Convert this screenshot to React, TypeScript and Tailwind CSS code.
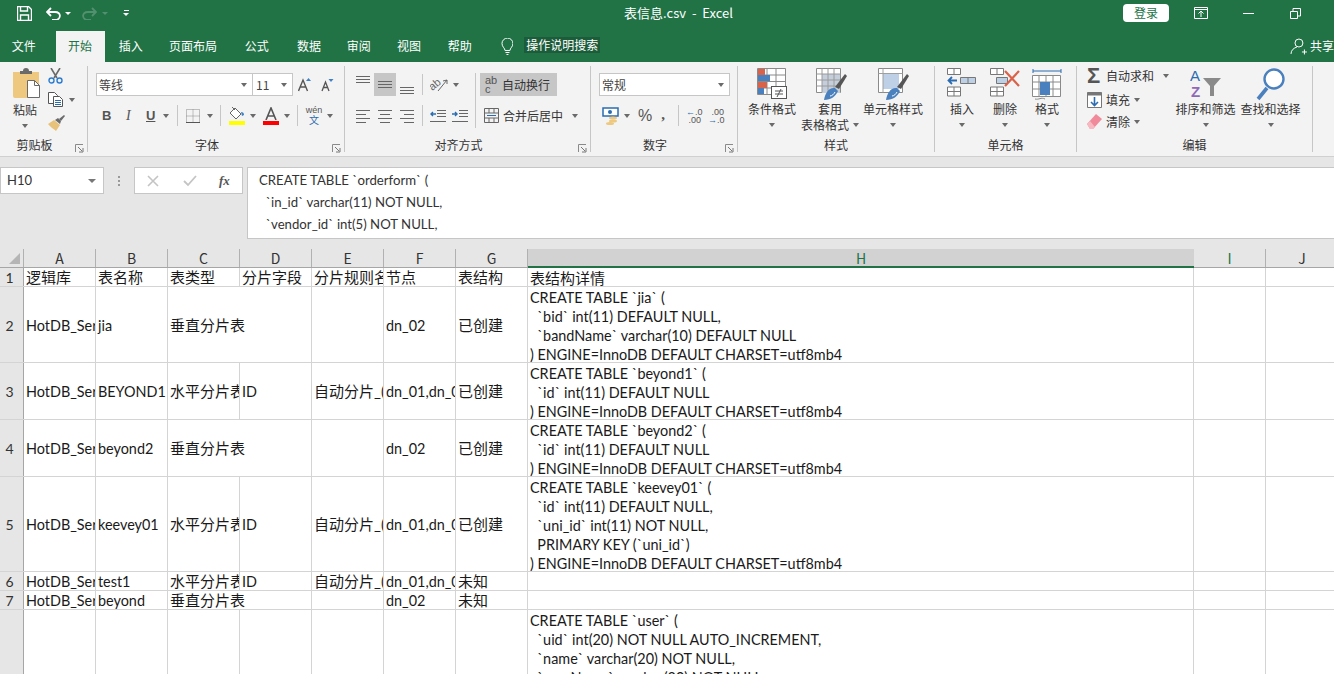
import type { ReactNode } from "react";

const ui = "font-['Noto_Sans_CJK_SC','Noto_Sans',sans-serif]";

function Caret({ className = "" }: { className?: string }) {
  return <span className={`block w-0 h-0 border-x-[3.5px] border-x-transparent border-t-[4px] border-t-[#6a6a6a] ${className}`} />;
}

function Launcher() {
  return (
    <svg width="9" height="9" viewBox="0 0 9 9" className="absolute right-[3px] bottom-[3px]">
      <path d="M.5 8V.5H8" fill="none" stroke="#8a8a8a" />
      <path d="M3 3l4 4M8 4v4H4" fill="none" stroke="#777" />
    </svg>
  );
}

function Group({ w, label, children, launcher }: { w: string; label: string; children: ReactNode; launcher?: boolean }) {
  return (
    <div className={`relative shrink-0 h-full flex flex-col ${w}`}>
      <div className="h-[76px] flex">{children}</div>
      <div className={`text-center text-xs leading-4 text-[#333] mt-[-1px] ${launcher ? "pr-[18px]" : ""}`}>{label}</div>
      {launcher && <Launcher />}
    </div>
  );
}

function Divider() {
  return <div className="w-px h-[86px] mt-1 bg-[#c6c6c6] shrink-0" />;
}

function Sep({ h = "h-[21px]" }: { h?: string }) {
  return <span className={`block w-px bg-[#c6c6c6] ${h}`} />;
}

function Lines({ kind = "l" }: { kind?: "l" | "c" | "r" | "f" }) {
  const rows = [1.5, 5.5, 9.5, 13.5];
  const span: Record<string, number[][]> = {
    l: [[0, 14], [0, 10], [0, 14], [0, 10]],
    c: [[0, 14], [2, 12], [0, 14], [2, 12]],
    r: [[0, 14], [4, 14], [0, 14], [4, 14]],
  };
  if (kind === "f") {
    return (
      <svg width="14" height="7" viewBox="0 0 14 7" className="block">
        <path d="M0 .5h14M0 3.5h14M0 6.5h14" stroke="#666" />
      </svg>
    );
  }
  return (
    <svg width="14" height="14" viewBox="0 0 14 14" className="block">
      {rows.map((r, i) => (
        <path key={r} d={`M${span[kind][i][0]} ${r}H${span[kind][i][1]}`} stroke="#666" />
      ))}
    </svg>
  );
}

function Clipboard() {
  return (
    <div className="flex pt-[6px]">
      <div className="w-[40px] ml-[12px] flex flex-col items-center shrink-0">
        <svg width="29" height="30" viewBox="0 0 29 30" className="ml-[-12px]">
          <path d="M1 4h26v14H16v12H3a2 2 0 0 1-2-2z" fill="#edc87e" />
          <path d="M8 5V3h3a3 3 0 0 1 6 0h3v3H8z" fill="#6a6a6a" />
          <path d="M15.5 12.5h7l5 5v12h-12z" fill="#fff" stroke="#6a6a6a" />
          <path d="M22.5 12.5v5h5" fill="none" stroke="#6a6a6a" />
        </svg>
        <span className="text-xs leading-4 mt-[4px] ml-[-14px] text-[#333]">粘贴</span>
        <Caret className="mt-[6px] ml-[-14px]" />
      </div>
      <div className="flex flex-col items-start ml-[-4px]">
        <svg width="15" height="16" viewBox="0 0 15 16">
          <path d="M3 0l6 10M12 0L6 10" stroke="#6a6a6a" strokeWidth="1.6" />
          <circle cx="3.5" cy="12.5" r="2.5" fill="none" stroke="#2b7cd3" strokeWidth="1.4" />
          <circle cx="11.5" cy="12.5" r="2.5" fill="none" stroke="#2b7cd3" strokeWidth="1.4" />
        </svg>
        <div className="flex items-center mt-[8px]">
          <svg width="16" height="15" viewBox="0 0 16 15">
            <path d="M.5.5h6l3 3v8h-9z" fill="#fff" stroke="#555" />
            <path d="M5.5 4.5h6l3 3v7h-9z" fill="#fff" stroke="#555" />
            <path d="M7 8.5h6M7 10.5h6M7 12.5h6" stroke="#2b6cb0" />
          </svg>
          <Caret className="ml-[5px]" />
        </div>
        <svg width="17" height="16" viewBox="0 0 17 16" className="mt-[8px]">
          <path d="M0 9l6-4 6 5-4 6C6 14 2 12 0 9z" fill="#e8c27a" />
          <path d="M7 5l3-2 3 3-1 3z" fill="#6a6a6a" />
          <path d="M11 4l5-4 1 1-4 5z" fill="#6a6a6a" />
        </svg>
      </div>
    </div>
  );
}

function FontGroup() {
  return (
    <div className="flex flex-col ml-[8px] pt-[11px] gap-[9px]">
      <div className="flex items-center">
        <div className="w-[157px] h-[23px] bg-white border border-[#c6c6c6] flex items-center justify-between pl-[2px] pr-[5px] text-xs text-[#444]">
          等线
          <Caret />
        </div>
        <div className="w-[40px] h-[23px] bg-white border border-[#c6c6c6] border-l-0 flex items-center justify-between pl-[3px] pr-[5px] text-xs text-[#444]">
          11
          <Caret />
        </div>
        <svg width="14" height="14" viewBox="0 0 14 14" className="ml-[5px]">
          <path d="M.5 13L5 2l4.5 11M2.5 9h5" fill="none" stroke="#555" strokeWidth="1.4" />
          <path d="M8 3l2.5-3L13 3z" fill="#3f80c4" />
        </svg>
        <svg width="13" height="13" viewBox="0 0 13 13" className="ml-[9px] mt-px">
          <path d="M1 12L4.5 3 8 12M2.500 8.500h4" fill="none" stroke="#555" strokeWidth="1.3" />
          <path d="M7.500 0h5L10 3z" fill="#3f80c4" />
        </svg>
      </div>
      <div className="flex items-center h-[21px] text-[#555]">
        <span className="w-[10px] ml-[6px] font-['Liberation_Sans'] font-bold text-[13px] leading-4">B</span>
        <span className="w-[8px] ml-[14px] font-['Liberation_Serif'] italic text-[14px] leading-4">I</span>
        <span className="w-[10px] ml-[12px] font-['Liberation_Sans'] underline font-bold text-[13px] leading-4">U</span>
        <Caret className="ml-[7px]" />
        <span className="ml-[8px]"><Sep /></span>
        <svg width="14" height="14" viewBox="0 0 14 14" className="ml-[8px]">
          <path d="M.5.5h13v13h-13zM7 .5v13M.5 7h13" fill="none" stroke="#888" strokeDasharray="1 1" />
          <path d="M0 13.500h14" stroke="#555" />
        </svg>
        <Caret className="ml-[7px]" />
        <span className="ml-[7px]"><Sep /></span>
        <div className="ml-[7px] w-[17px] flex flex-col items-center mt-[1px]">
          <svg width="16" height="13" viewBox="0 0 16 13">
            <path d="M6 1l6 6-5 5-6-6z" fill="#fff" stroke="#666" />
            <path d="M3 0l3 3" stroke="#666" />
            <path d="M12 5c2 0 3 1 3 3l-2 1z" fill="#3f80c4" />
          </svg>
          <span className="block w-[16px] h-[4px] bg-[#ffff00] mt-[1px]" />
        </div>
        <Caret className="ml-[5px]" />
        <div className="ml-[6px] w-[17px] flex flex-col items-center mt-[1px]">
          <svg width="14" height="13" viewBox="0 0 14 13">
            <path d="M2 13L7 1l5 12M4 9h6" fill="none" stroke="#555" strokeWidth="1.6" />
          </svg>
          <span className="block w-[16px] h-[4px] bg-[#ff0000] mt-[1px]" />
        </div>
        <Caret className="ml-[5px]" />
        <span className="ml-[7px]"><Sep /></span>
        <div className="ml-[8px] w-[16px] flex flex-col items-center leading-none">
          <span className="text-[9px] leading-[9px] font-['Liberation_Sans'] text-[#555]">wén</span>
          <span className="text-[10px] leading-[10px] text-[#2b6cb0]">文</span>
        </div>
        <Caret className="ml-[5px]" />
      </div>
    </div>
  );
}

function AlignGroup() {
  return (
    <div className="flex ml-[11px] pt-[11px]">
      <div className="flex flex-col gap-[9px]">
        <div className="flex h-[23px] items-center">
          <div className="w-[14px] self-start mt-[3px]"><Lines kind="f" /></div>
          <div className="w-[22px] h-[23px] ml-[4px] bg-[#c6c6c6] flex items-center justify-center"><Lines kind="f" /></div>
          <div className="w-[14px] ml-[4px] self-end mb-[2px]"><Lines kind="f" /></div>
          <span className="ml-[8px]"><Sep /></span>
          <svg width="18" height="17" viewBox="0 0 18 17" className="ml-[7px]">
            <text x="0" y="13" transform="rotate(-40 4 11)" fontSize="11" fontFamily="Liberation Sans" fill="#666">ab</text>
            <path d="M8 15L17 4M17 4l-4 1M17 4v4" fill="none" stroke="#666" />
          </svg>
          <Caret className="ml-[5px]" />
        </div>
        <div className="flex h-[21px] items-center">
          <Lines kind="l" />
          <span className="ml-[8px]"><Lines kind="c" /></span>
          <span className="ml-[8px]"><Lines kind="r" /></span>
          <span className="ml-[8px]"><Sep /></span>
          <svg width="16" height="12" viewBox="0 0 16 12" className="ml-[7px]">
            <path d="M7 .5h9M7 3.500h9M7 6.500h9M0 11.500h16" stroke="#666" />
            <path d="M6 4H1M3 2L1 4l2 2" fill="none" stroke="#2b6cb0" strokeWidth="1.4" />
          </svg>
          <svg width="16" height="12" viewBox="0 0 16 12" className="ml-[6px]">
            <path d="M7 .5h9M7 3.500h9M7 6.500h9M0 11.500h16" stroke="#666" />
            <path d="M0 4h5M3 2l2 2-2 2" fill="none" stroke="#2b6cb0" strokeWidth="1.4" />
          </svg>
        </div>
      </div>
      <span className="ml-[7px] block w-px h-[55px] bg-[#c6c6c6]" />
      <div className="flex flex-col gap-[9px] ml-[4px]">
        <div className="w-[77px] h-[23px] bg-[#c6c6c6] flex items-center pl-[5px] text-xs text-[#333]">
          <span className="w-[13px] text-[11px] leading-[9px] font-['Liberation_Sans'] text-[#555]">ab<br />c</span>
          <span className="ml-[4px]">自动换行</span>
        </div>
        <div className="flex items-center h-[21px] pl-[4px] text-xs text-[#333]">
          <svg width="15" height="15" viewBox="0 0 15 15">
            <path d="M.5.5h14v14H.5zM.5 5h14M.5 10h14M5 .5V5M10 .5V5M5 10v4.500M10 10v4.500" fill="none" stroke="#666" />
            <path d="M3 7.500h9" stroke="#2b6cb0" />
          </svg>
          <span className="ml-[4px]">合并后居中</span>
          <Caret className="ml-[9px]" />
        </div>
      </div>
    </div>
  );
}

function NumberGroup() {
  return (
    <div className="flex flex-col ml-[8px] pt-[11px] gap-[9px]">
      <div className="w-[131px] h-[23px] bg-white border border-[#c6c6c6] flex items-center justify-between pl-[2px] pr-[5px] text-xs text-[#444]">
        常规
        <Caret />
      </div>
      <div className="flex items-center h-[21px] text-[#555]">
        <svg width="17" height="18" viewBox="0 0 17 18" className="ml-[3px]">
          <rect x="1" y="1" width="15" height="8" fill="#fff" stroke="#2b6cb0" strokeWidth="1.5" />
          <circle cx="8" cy="5" r="2" fill="#2b6cb0" />
          <ellipse cx="11" cy="11" rx="4" ry="1.500" fill="#edc87e" />
          <ellipse cx="11" cy="14" rx="4" ry="1.500" fill="#edc87e" />
          <ellipse cx="8" cy="16.500" rx="4" ry="1.500" fill="#edc87e" />
        </svg>
        <Caret className="ml-[5px]" />
        <span className="ml-[8px] text-[16px] font-['Liberation_Sans'] leading-4">%</span>
        <span className="ml-[9px] text-[15px] font-bold font-['Liberation_Serif'] leading-[12px] mb-[4px]">,</span>
        <span className="ml-[13px]"><Sep /></span>
        <div className="ml-[7px] w-[15px] text-[9px] leading-[8px] font-['Liberation_Sans'] text-right text-[#555] whitespace-nowrap">
          <span className="text-[#2b6cb0]">←</span>.0<br />.00
        </div>
        <div className="ml-[7px] w-[16px] text-[9px] leading-[8px] font-['Liberation_Sans'] text-right text-[#555] whitespace-nowrap">
          .00<br /><span className="text-[#2b6cb0]">→</span>.0
        </div>
      </div>
    </div>
  );
}

function BigButton({ w, icon, label, label2, ml = "" }: { w: string; icon: ReactNode; label: string; label2?: string; ml?: string }) {
  return (
    <div className={`${w} ${ml} shrink-0 flex flex-col items-center pt-[6px]`}>
      <div className="h-[30px] flex items-start justify-center">{icon}</div>
      <span className="text-xs leading-4 mt-[3px] whitespace-nowrap text-[#333]">{label}</span>
      {label2 ? (
        <span className="flex items-center text-xs leading-4 whitespace-nowrap text-[#333]">
          {label2}
          <Caret className="ml-[4px]" />
        </span>
      ) : (
        <Caret className="mt-[6px]" />
      )}
    </div>
  );
}

function CondIcon() {
  return (
    <svg width="30" height="31" viewBox="0 0 30 31">
      <path d="M.5.5h28v26H.5zM.5 7h28M.5 13.500h28M.5 20h28M10 .5v26M19 .5v26" fill="#fff" stroke="#8a8a8a" />
      <rect x="1" y="1" width="7" height="6" fill="#d9634a" />
      <rect x="1" y="7" width="12" height="6" fill="#4a80bd" />
      <rect x="1" y="14" width="9" height="6" fill="#d9634a" />
      <rect x="1" y="20" width="6" height="6" fill="#4a80bd" />
      <rect x="14.500" y="18.500" width="15" height="12" fill="#fff" stroke="#555" />
      <path d="M18 23h8M18 26h8M24 21l-4 8" stroke="#555" />
    </svg>
  );
}

function TableStyleIcon({ filled }: { filled?: boolean }) {
  return (
    <svg width="31" height="33" viewBox="0 0 31 33" className={filled ? "" : "ml-[3px]"}>
      <path d="M.5.5h24v24H.5z" fill="#fff" stroke="#8a8a8a" />
      {filled ? (
        <path d="M5 6h16v15H5z" fill="#bdd0e6" />
      ) : (
        <path d="M6 6h18v19H6z" fill="#c5cfdc" />
      )}
      {!filled && <path d="M.5 6h24M.5 12h24M.5 18h24M6 .5v24M12 .5v24M18 .5v24" stroke="#9a9a9a" />}
      {filled && <path d="M.5 5.500h24M5 .5v24" stroke="#a0a0a0" />}
      <path d="M19 19L29 6l2 2-8 13z" fill="#555" />
      <path d="M8 32c1-7 5-13 11-12l3 3c-2 5-7 9-14 9z" fill="#4a80bd" />
      <path d="M14 28c2 0 4-2 5-4" stroke="#fff" fill="none" />
    </svg>
  );
}

function InsertIcon() {
  return (
    <svg width="30" height="29" viewBox="0 0 30 29">
      <path d="M.5.5h13v6H.5zM7 .5v6M.5 19h13v9H.5zM7 19v9M.5 23.500h13" fill="#fff" stroke="#777" />
      <path d="M13.500 9.500h15v6h-15zM21 9.500v6" fill="#bdd0e6" stroke="#777" />
      <path d="M10 12.500H2M5 9l-3.500 3.500L5 16" fill="none" stroke="#2b6cb0" strokeWidth="1.8" />
    </svg>
  );
}

function DeleteIcon() {
  return (
    <svg width="31" height="29" viewBox="0 0 31 29">
      <path d="M.5.500h13v6H.5zM7 .500v6M.5 19h13v9H.5zM7 19v9M.5 23.500h13" fill="#fff" stroke="#777" />
      <path d="M6.500 9.500h11v6h-11z" fill="#bdd0e6" stroke="#777" />
      <path d="M15 3l14 15M29 3L15 18" stroke="#d9634a" strokeWidth="2.2" />
    </svg>
  );
}

function FormatIcon() {
  return (
    <svg width="30" height="33" viewBox="0 0 30 33">
      <path d="M1 3h28M1 1v4M29 1v4" stroke="#2b6cb0" />
      <path d="M.5 7.500h28v21H.5zM.5 14h28M.5 21h28M7 7.500v21M14 7.500v21M21 7.500v21" fill="#fff" stroke="#8a8a8a" />
      <rect x="8" y="14" width="10" height="13" fill="#4a80bd" />
      <path d="M3 31c4 1 6-2 10 0" fill="none" stroke="#8a8a8a" />
    </svg>
  );
}

function SortIcon() {
  return (
    <svg width="32" height="30" viewBox="0 0 32 30">
      <text x="0" y="13" fontSize="15" fontFamily="Liberation Sans" fill="#2b6cb0">A</text>
      <text x="1" y="29" fontSize="15" fontFamily="Liberation Sans" fontWeight="bold" fill="#9068b8">Z</text>
      <path d="M13 10h18l-7 8v10h-4V18z" fill="#8a8a8a" />
    </svg>
  );
}

function SearchIcon() {
  return (
    <svg width="29" height="33" viewBox="0 0 29 33">
      <circle cx="18" cy="11" r="9.500" fill="#fff" stroke="#4a80bd" strokeWidth="2.4" />
      <path d="M2 31l9-11" stroke="#4a80bd" strokeWidth="3.6" />
    </svg>
  );
}

function EditGroup() {
  return (
    <div className="flex">
      <div className="w-[113px] ml-[10px] pt-[5px] flex flex-col text-xs text-[#333] shrink-0">
        <div className="flex items-center h-[17px]">
          <span className="w-[16px] text-[22px] leading-4 font-bold font-['Liberation_Sans'] text-[#555]">Σ</span>
          <span className="ml-[3px]">自动求和</span>
          <Caret className="ml-[9px]" />
        </div>
        <div className="flex items-center h-[17px] mt-[7px]">
          <svg width="15" height="16" viewBox="0 0 15 16">
            <path d="M.5.5h14v15H.5z" fill="#fff" stroke="#777" />
            <path d="M.5.5h14v3H.5z" fill="#777" />
            <path d="M7.500 5v8M4 10l3.500 3.500L11 10" fill="none" stroke="#2b6cb0" strokeWidth="1.600" />
          </svg>
          <span className="ml-[4px]">填充</span>
          <Caret className="ml-[4px]" />
        </div>
        <div className="flex items-center h-[17px] mt-[5px]">
          <svg width="15" height="15" viewBox="0 0 15 15">
            <path d="M0 10L9 0l6 5-9 10H3z" fill="#f08a9a" />
            <path d="M0 10l3 5h3l2-2-5-6z" fill="#f7b8c2" />
          </svg>
          <span className="ml-[4px]">清除</span>
          <Caret className="ml-[4px]" />
        </div>
      </div>
      <BigButton w="w-[65px]" icon={<SortIcon />} label="排序和筛选" ml="ml-[-27px]" />
      <BigButton w="w-[65px]" icon={<SearchIcon />} label="查找和选择" />
    </div>
  );
}

function WindowIcons() {
  return (
    <div className="ml-[25px] flex items-center">
      <svg width="14" height="12" viewBox="0 0 14 12">
        <path d="M.5.5h13v11H.5zM.5 2.500h13M7 10V4.500M4.500 6.500L7 4l2.500 2.500" fill="none" stroke="#fff" />
      </svg>
      <span className="block ml-[35px] w-[11px] h-px bg-white" />
      <svg width="11" height="11" viewBox="0 0 11 11" className="ml-[36px]">
        <path d="M.5 3.500h7v7h-7zM3 3V.5h7.500V8H8" fill="none" stroke="#fff" />
      </svg>
    </div>
  );
}

function TitleBar() {
  return (
    <div className="h-[31px] pb-[5px] flex items-center text-white shrink-0">
      <svg width="15" height="15" viewBox="0 0 15 15" className="ml-[17px]">
        <path d="M.5.500h11l3 3v11H.5z" fill="none" stroke="#fff" strokeWidth="1.400" />
        <path d="M3.500 1v4h7V1M3.500 14V9h8v5" fill="none" stroke="#fff" strokeWidth="1.400" />
      </svg>
      <svg width="15" height="13" viewBox="0 0 15 13" className="ml-[14px]">
        <path d="M1 5h8c7 0 6 8 0 8H6" fill="none" stroke="#fff" strokeWidth="1.800" />
        <path d="M5 1L1 5l4 4" fill="none" stroke="#fff" strokeWidth="1.800" />
      </svg>
      <span className="ml-[4px] block w-0 h-0 border-x-[3px] border-x-transparent border-t-[3px] border-t-white" />
      <svg width="15" height="13" viewBox="0 0 15 13" className="ml-[11px]">
        <path d="M14 5H6c-7 0-6 8 0 8h3M10 1l4 4-4 4" fill="none" stroke="#53906f" strokeWidth="1.800" />
      </svg>
      <span className="ml-[5px] block w-0 h-0 border-x-[3px] border-x-transparent border-t-[3px] border-t-[#53906f]" />
      <div className="ml-[15px] flex flex-col items-center gap-[2px]">
        <span className="block w-[5px] h-px bg-white" />
        <span className="block w-0 h-0 border-x-[3px] border-x-transparent border-t-[3px] border-t-white" />
      </div>
      <span className="ml-[495px] w-[114px] text-[13px] whitespace-pre">表信息.csv  -  Excel</span>
      <span className="ml-[385px] w-[46px] h-[18px] bg-white rounded-sm text-[#217346] text-xs leading-[18px] text-center">登录</span>
      <WindowIcons />
    </div>
  );
}

function TabRow() {
  const tabs: [string, string][] = [
    ["文件", "w-[48px]"],
    ["插入", "w-[53px]"],
    ["页面布局", "w-[72px]"],
    ["公式", "w-[56px]"],
    ["数据", "w-[49px]"],
    ["审阅", "w-[51px]"],
    ["视图", "w-[50px]"],
    ["帮助", "w-[52px]"],
  ];
  return (
    <div className="h-[31px] flex items-start shrink-0 text-xs text-white">
      <div className={`${tabs[0][1]} h-[30px] leading-[30px] text-center`}>{tabs[0][0]}</div>
      <div className="w-[49px] ml-[8px] h-[31px] bg-[#f3f3f3] text-[#217346] leading-[30px] text-center">开始</div>
      {tabs.slice(1).map(([t, w]) => (
        <div key={t} className={`${w} h-[30px] leading-[30px] text-center`}>{t}</div>
      ))}
      <svg width="13" height="17" viewBox="0 0 13 17" className="ml-[15px] mt-[7px]">
        <path d="M4 12.500C4 10 1 9 1 5.500a5.500 5.500 0 0 1 11 0C12 9 9 10 9 12.500z" fill="none" stroke="#fff" />
        <path d="M4.500 14.500h4M5.500 16.500h2" stroke="#fff" />
      </svg>
      <span className="ml-[11px] mt-[6px] w-[76px] h-[16px] leading-4 bg-[#1c5c3a] text-center whitespace-nowrap">操作说明搜索</span>
      <svg width="17" height="17" viewBox="0 0 17 17" className="ml-[690px] mt-[7px]">
        <circle cx="9" cy="5" r="4" fill="none" stroke="#fff" />
        <path d="M1 16c0-4 3-6 6-7M12 14h5M14.500 11.500v5" fill="none" stroke="#fff" />
      </svg>
      <span className="ml-[3px] leading-[30px] whitespace-nowrap">共享</span>
    </div>
  );
}

function Ribbon() {
  return (
    <div className="h-[94px] bg-[#f3f3f3] flex items-start overflow-hidden text-[#333] shrink-0">
      <Group w="w-[87px]" label="剪贴板" launcher><Clipboard /></Group>
      <Divider />
      <Group w="w-[256px]" label="字体" launcher><FontGroup /></Group>
      <Divider />
      <Group w="w-[245px]" label="对齐方式" launcher><AlignGroup /></Group>
      <Divider />
      <Group w="w-[146px]" label="数字" launcher><NumberGroup /></Group>
      <Divider />
      <Group w="w-[196px]" label="样式">
        <BigButton w="w-[68px]" icon={<CondIcon />} label="条件格式" />
        <BigButton w="w-[48px]" icon={<TableStyleIcon />} label="套用" label2="表格格式" />
        <BigButton w="w-[58px]" ml="ml-[10px]" icon={<TableStyleIcon filled />} label="单元格样式" />
      </Group>
      <Divider />
      <Group w="w-[141px]" label="单元格">
        <BigButton w="w-[44px]" ml="ml-[5px]" icon={<InsertIcon />} label="插入" />
        <BigButton w="w-[42px]" icon={<DeleteIcon />} label="删除" />
        <BigButton w="w-[42px]" icon={<FormatIcon />} label="格式" />
      </Group>
      <Divider />
      <Group w="w-[235px]" label="编辑"><EditGroup /></Group>
      <Divider />
    </div>
  );
}

function FormulaBar() {
  return (
    <div className="h-[93px] bg-[#e6e6e6] border-t border-[#d0d0d0] flex items-start pt-[10px] shrink-0">
      <div className="w-[104px] h-[27px] bg-white border border-[#c6c6c6] flex items-center justify-between pl-[6px] pr-[7px] text-[13px] font-['Lato'] text-[#333]">
        H10
        <span className="block w-0 h-0 border-x-[4px] border-x-transparent border-t-[4px] border-t-[#777]" />
      </div>
      <div className="w-[30px] h-[27px] flex flex-col items-center justify-center gap-[2px]">
        <span className="block w-[2px] h-[2px] bg-[#999]" />
        <span className="block w-[2px] h-[2px] bg-[#999]" />
        <span className="block w-[2px] h-[2px] bg-[#999]" />
      </div>
      <div className="w-[109px] h-[27px] bg-white border border-[#c6c6c6] flex items-center">
        <svg width="12" height="12" viewBox="0 0 12 12" className="ml-[12px]">
          <path d="M1 1l10 10M11 1L1 11" stroke="#c4c4c4" strokeWidth="1.600" />
        </svg>
        <svg width="14" height="12" viewBox="0 0 14 12" className="ml-[24px]">
          <path d="M1 6l4 4 8-9" fill="none" stroke="#c4c4c4" strokeWidth="1.800" />
        </svg>
        <span className="ml-[22px] font-['Liberation_Serif'] italic font-bold text-[13px] leading-4 text-[#555]">fx</span>
      </div>
      <div className="ml-[4px] flex-1 h-[72px] bg-white border border-[#c6c6c6] border-r-0 pl-[11px] pt-[1px] text-[13.2px] leading-[22px] font-['Lato'] text-[#333] whitespace-pre">
        {"CREATE TABLE `orderform` (\n  `in_id` varchar(11) NOT NULL,\n  `vendor_id` int(5) NOT NULL,"}
      </div>
    </div>
  );
}

const cols = ["A", "B", "C", "D", "E", "F", "G"];

function ColumnHeader() {
  return (
    <div className="h-[19px] flex bg-[#e6e6e6] border-b border-[#a6a6a6] text-[14px] leading-[19px] text-[#333] shrink-0">
      <div className="w-[24px] border-r border-[#b1b1b1] relative shrink-0">
        <span className="absolute left-[9px] top-[4px] w-0 h-0 border-l-[11px] border-l-transparent border-b-[11px] border-b-[#b5b5b5]" />
      </div>
      {cols.map((c) => (
        <div key={c} className="w-[72px] text-center border-r border-[#b1b1b1] shrink-0">{c}</div>
      ))}
      <div className="w-[666px] text-center bg-[#d2d2d2] border-b-2 border-[#217346] h-[19px] text-[#217346] shrink-0">H</div>
      <div className="w-[72px] text-center border-r border-[#b1b1b1] text-[#217346] shrink-0">I</div>
      <div className="w-[72px] text-center shrink-0">J</div>
    </div>
  );
}

type Row = {
  n: number;
  h: string;
  a?: string;
  b?: string;
  c?: string;
  d?: string;
  e?: string;
  f?: string;
  g?: string;
  detail?: string;
  span?: boolean;
};

const rule = "自动分片_(dn_01,dn_02)";

const rows: Row[] = [
  { n: 1, h: "h-[19px]", a: "逻辑库", b: "表名称", c: "表类型", d: "分片字段", e: "分片规则名称", f: "节点", g: "表结构", detail: "表结构详情" },
  { n: 2, h: "h-[76px]", a: "HotDB_Server", b: "jia", c: "垂直分片表", span: true, f: "dn_02", g: "已创建", detail: "CREATE TABLE `jia` (\n  `bid` int(11) DEFAULT NULL,\n  `bandName` varchar(10) DEFAULT NULL\n) ENGINE=InnoDB DEFAULT CHARSET=utf8mb4" },
  { n: 3, h: "h-[57px]", a: "HotDB_Server", b: "BEYOND1", c: "水平分片表", d: "ID", e: rule, f: "dn_01,dn_02", g: "已创建", detail: "CREATE TABLE `beyond1` (\n  `id` int(11) DEFAULT NULL\n) ENGINE=InnoDB DEFAULT CHARSET=utf8mb4" },
  { n: 4, h: "h-[57px]", a: "HotDB_Server", b: "beyond2", c: "垂直分片表", span: true, f: "dn_02", g: "已创建", detail: "CREATE TABLE `beyond2` (\n  `id` int(11) DEFAULT NULL\n) ENGINE=InnoDB DEFAULT CHARSET=utf8mb4" },
  { n: 5, h: "h-[95px]", a: "HotDB_Server", b: "keevey01", c: "水平分片表", d: "ID", e: rule, f: "dn_01,dn_02", g: "已创建", detail: "CREATE TABLE `keevey01` (\n  `id` int(11) DEFAULT NULL,\n  `uni_id` int(11) NOT NULL,\n  PRIMARY KEY (`uni_id`)\n) ENGINE=InnoDB DEFAULT CHARSET=utf8mb4" },
  { n: 6, h: "h-[19px]", a: "HotDB_Server", b: "test1", c: "水平分片表", d: "ID", e: rule, f: "dn_01,dn_02", g: "未知" },
  { n: 7, h: "h-[19px]", a: "HotDB_Server", b: "beyond", c: "垂直分片表", span: true, f: "dn_02", g: "未知" },
  { n: 8, h: "h-[120px]", detail: "CREATE TABLE `user` (\n  `uid` int(20) NOT NULL AUTO_INCREMENT,\n  `name` varchar(20) NOT NULL,\n  `passName` varchar(20) NOT NULL" },
];

// the CJK glyphs sit on a 15px em in the sheet, latin runs a bit smaller
const isZh = (s?: string) => !!s && /^[\u4e00-\u9fff]/.test(s);

function Cell({ w = "w-[72px]", text }: { w?: string; text?: string }) {
  return (
    <div className={`${w} shrink-0 border-r border-[#d4d4d4] pl-[2px] pt-px flex items-center overflow-hidden whitespace-nowrap ${isZh(text) ? "text-[15px]" : ""}`}>
      {text}
    </div>
  );
}

function Sheet() {
  return (
    <div className="bg-white font-['Lato','Noto_Sans_CJK_SC',sans-serif] text-[14.4px] leading-[19px] text-[#1a1a1a]">
      {rows.map((r) => (
        <div key={r.n} className={`${r.h} flex border-b border-[#d4d4d4]`}>
          <div className="w-[24px] shrink-0 bg-[#e6e6e6] border-r border-[#a6a6a6] flex items-center justify-center pr-[4px] pt-px text-[#333] text-[14px]">
            {r.n !== 8 ? r.n : ""}
          </div>
          <Cell text={r.a} />
          <Cell text={r.b} />
          {r.span ? (
            <Cell w="w-[144px]" text={r.c} />
          ) : (
            <>
              <Cell text={r.c} />
              <Cell text={r.d} />
            </>
          )}
          <Cell text={r.e} />
          <Cell text={r.f} />
          <Cell text={r.g} />
          <div className={`w-[666px] shrink-0 border-r border-[#d4d4d4] pl-[2px] pt-px whitespace-pre overflow-hidden ${isZh(r.detail) ? "text-[15px]" : ""}`}>{r.detail}</div>
          <Cell />
          <Cell />
        </div>
      ))}
    </div>
  );
}

export default function App() {
  return (
    <div className={`w-[1334px] h-[674px] overflow-hidden flex flex-col bg-[#217346] ${ui}`}>
      <TitleBar />
      <TabRow />
      <Ribbon />
      <FormulaBar />
      <ColumnHeader />
      <Sheet />
    </div>
  );
}
